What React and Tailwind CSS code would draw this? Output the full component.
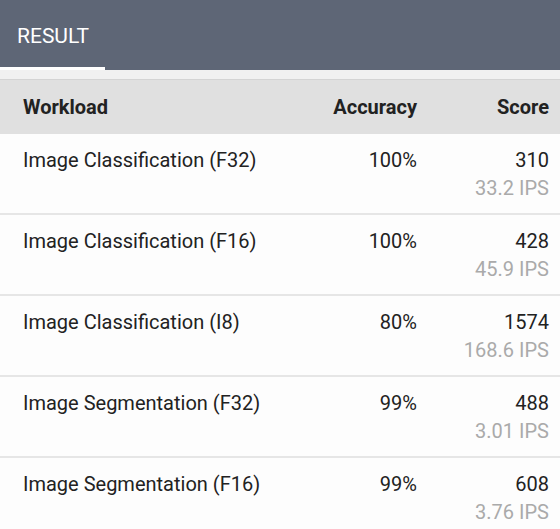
import React from 'react';

const rows = [
    { name: 'Image Classification (F32)', acc: '100%', score: '310', ips: '33.2 IPS' },
    { name: 'Image Classification (F16)', acc: '100%', score: '428', ips: '45.9 IPS' },
    { name: 'Image Classification (I8)', acc: '80%', score: '1574', ips: '168.6 IPS' },
    { name: 'Image Segmentation (F32)', acc: '99%', score: '488', ips: '3.01 IPS' },
    { name: 'Image Segmentation (F16)', acc: '99%', score: '608', ips: '3.76 IPS' },
];

const App = () => {
    return (
        <div className="w-[560px] h-[529px] overflow-hidden bg-[#fdfdfd] font-['Roboto',sans-serif]">
            {/* Tab bar */}
            <div className="h-[70px] bg-[#5e6676] flex flex-col justify-end">
                <div className="w-[105px] flex flex-col">
                    <div className="h-[67px] flex items-center pl-[17px] pt-[6px] text-[21px] text-white">
                        RESULT
                    </div>
                    <div className="h-[3px] bg-white"></div>
                </div>
            </div>
            <div className="h-[10px] bg-[#f1f1f1] border-b border-[#d4d4d4]"></div>

            {/* Table header */}
            <div className="h-[54px] bg-[#e0e0e0] flex items-center pl-[23px] pr-[11px] text-[20px] font-bold text-[#222]">
                <div className="flex-1">Workload</div>
                <div className="w-[140px] text-right">Accuracy</div>
                <div className="w-[132px] text-right">Score</div>
            </div>

            {/* Rows */}
            {rows.map((r) => (
                <div key={r.name} className="h-[81px] border-b-2 border-[#e6e6e6] flex items-start pt-[13px] pl-[23px] pr-[11px] text-[20px] text-[#222]">
                    <div className="flex-1 leading-[26px]">{r.name}</div>
                    <div className="w-[140px] text-right leading-[26px]">{r.acc}</div>
                    <div className="w-[132px] text-right">
                        <div className="leading-[26px]">{r.score}</div>
                        <div className="leading-[30px] text-[#aaaaaa]">{r.ips}</div>
                    </div>
                </div>
            ))}
        </div>
    );
};

export default App;
